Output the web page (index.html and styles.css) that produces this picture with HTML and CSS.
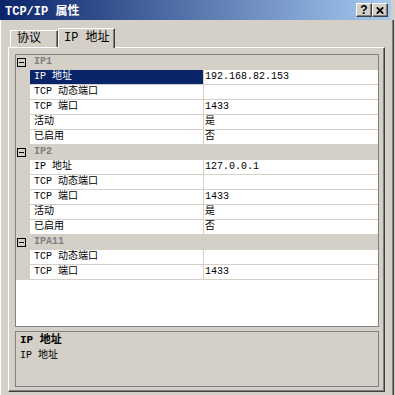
FILE: index.html
```html
<!DOCTYPE html>
<html lang="zh-CN">
<head>
    <meta charset="UTF-8">
    <title>TCP/IP 属性</title>
    <link rel="stylesheet" href="styles.css">
</head>
<body>
    <div class="window">
        <div class="titlebar">
            <span class="title">TCP/IP 属性</span>
            <div class="caption-buttons">
                <span class="cap-btn help">?</span>
                <span class="cap-btn close">
                    <svg width="8" height="7" viewBox="0 0 8 7"><path d="M0.8 0.3 L7.2 6.7 M7.2 0.3 L0.8 6.7" stroke="#000" stroke-width="1.7" fill="none"/></svg>
                </span>
            </div>
        </div>

        <div class="client">
            <div class="tabs">
                <div class="tab">协议</div>
                <div class="tab active">IP 地址</div>
            </div>

            <div class="tab-page">
                <div class="prop-grid">
                    <div class="row cat"><span class="expander"></span><span class="label">IP1</span></div>
                    <div class="row selected"><span></span><span class="cell name">IP 地址</span><span class="cell value">192.168.82.153</span></div>
                    <div class="row"><span></span><span class="cell name">TCP 动态端口</span><span class="cell value"></span></div>
                    <div class="row"><span></span><span class="cell name">TCP 端口</span><span class="cell value">1433</span></div>
                    <div class="row"><span></span><span class="cell name">活动</span><span class="cell value">是</span></div>
                    <div class="row"><span></span><span class="cell name">已启用</span><span class="cell value">否</span></div>

                    <div class="row cat"><span class="expander"></span><span class="label">IP2</span></div>
                    <div class="row"><span></span><span class="cell name">IP 地址</span><span class="cell value">127.0.0.1</span></div>
                    <div class="row"><span></span><span class="cell name">TCP 动态端口</span><span class="cell value"></span></div>
                    <div class="row"><span></span><span class="cell name">TCP 端口</span><span class="cell value">1433</span></div>
                    <div class="row"><span></span><span class="cell name">活动</span><span class="cell value">是</span></div>
                    <div class="row"><span></span><span class="cell name">已启用</span><span class="cell value">否</span></div>

                    <div class="row cat"><span class="expander"></span><span class="label">IPA11</span></div>
                    <div class="row"><span></span><span class="cell name">TCP 动态端口</span><span class="cell value"></span></div>
                    <div class="row"><span></span><span class="cell name">TCP 端口</span><span class="cell value">1433</span></div>
                </div>

                <div class="desc">
                    <div class="desc-title">IP 地址</div>
                    <div class="desc-text">IP 地址</div>
                </div>
            </div>
        </div>
    </div>
</body>
</html>
```

FILE: styles.css
```css
body {
    margin: 0;
    background: #d4d0c8;
    font-family: "Liberation Mono", "Noto Sans CJK SC", monospace;
    color: #000;
}

.window {
    width: 395px;
    height: 395px;
    display: flex;
    flex-direction: column;
    background: #d4d0c8;
    overflow: hidden;
}

/* title bar */
.titlebar {
    height: 20px;
    width: 391px;
    box-sizing: border-box;
    padding: 0 3px 0 5px;
    display: flex;
    align-items: center;
    justify-content: space-between;
    background: linear-gradient(to right, #0a246a, #a6caf0);
    color: #fff;
    font-size: 12px;
    font-weight: bold;
}
.caption-buttons {
    display: flex;
}
.cap-btn {
    width: 16px;
    height: 14px;
    box-sizing: border-box;
    display: flex;
    align-items: center;
    justify-content: center;
    background: #d4d0c8;
    border: 1px solid;
    border-color: #fff #404040 #404040 #fff;
    box-shadow: inset -1px -1px #808080;
    color: #000;
}
.cap-btn.help {
    font-family: "Liberation Sans", sans-serif;
    font-size: 12px;
    font-weight: bold;
    line-height: 12px;
    padding-bottom: 1px;
}

/* dialog body */
.client {
    flex: 1;
    display: flex;
    flex-direction: column;
    padding: 8px 8px 3px 8px;
    margin-right: 1px;
    border-right: 1px solid #404040;
    box-shadow: inset -1px 0 #808080, inset 1px 0 #fff;
    min-height: 0;
}

.tabs {
    display: flex;
    align-items: flex-end;
    height: 19px;
    padding-left: 2px;
    font-size: 12px;
}
.tab {
    height: 17px;
    width: 48px;
    box-sizing: border-box;
    border: 1px solid #fff;
    border-bottom: 0;
    border-right-color: #404040;
    box-shadow: inset -1px 0 #808080;
    padding-left: 6px;
    line-height: 16px;
    white-space: nowrap;
}
.tab.active {
    height: 20px;
    width: 57px;
    margin-bottom: -1px;
    position: relative;
    z-index: 1;
    background: #d4d0c8;
    padding-left: 5px;
    line-height: 19px;
}

.tab-page {
    flex: 1;
    display: flex;
    flex-direction: column;
    gap: 4px;
    padding: 6px 5px 4px 6px;
    border: 1px solid;
    border-color: #fff #404040 #404040 #fff;
    box-shadow: inset -1px -1px #808080;
    min-height: 0;
}

/* property grid */
.prop-grid {
    flex: 1;
    background: #fff;
    border: 1px solid #808080;
    font-size: 10px;
}
.row {
    display: grid;
    grid-template-columns: 13px 173px 1fr;
    column-gap: 1px;
    height: 15px;
    box-sizing: border-box;
    padding-bottom: 1px;
    background: #d4d0c8;
    line-height: 14px;
}
.cell {
    background: #fff;
    white-space: nowrap;
    overflow: hidden;
}
.name {
    padding-left: 4px;
}
.value {
    padding-left: 1px;
}
.row.selected .name {
    background: #0a246a;
    color: #fff;
}
.row.cat .label {
    grid-column: 2 / 4;
    padding-left: 4px;
    font-weight: bold;
    color: #808080;
}
.expander {
    width: 9px;
    height: 9px;
    box-sizing: border-box;
    margin: 3px 0 0 1px;
    border: 1px solid #000;
    display: flex;
    align-items: center;
    justify-content: center;
}
.expander::after {
    content: "";
    width: 5px;
    height: 1px;
    background: #000;
}

/* description pane */
.desc {
    height: 56px;
    box-sizing: border-box;
    border: 1px solid #808080;
    padding: 1px 4px;
    line-height: 15px;
}
.desc-title {
    font-size: 11px;
    font-weight: bold;
}
.desc-text {
    font-size: 10px;
}
```
